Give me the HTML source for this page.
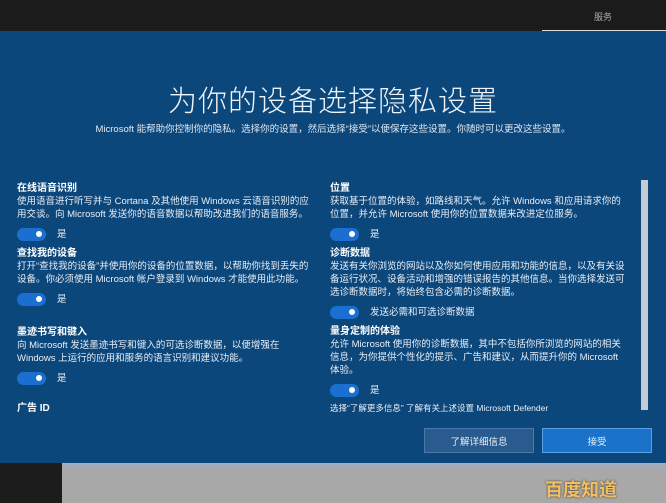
<!DOCTYPE html>
<html><head><meta charset="utf-8"><style>
*{margin:0;padding:0;box-sizing:border-box}
html{background:#a8a8a8}
body{width:666px;height:500px;overflow:hidden;background:#0c477c;font-family:"Liberation Sans","Noto Sans CJK SC",sans-serif;color:#e8eef5;position:relative}
.top{position:absolute;left:0;top:0;width:666px;height:31px;background:#1b1b1b}
.top span{position:absolute;left:594px;top:10px;font-size:9px;color:#aaa}
.topline{position:absolute;left:542px;top:30px;width:124px;height:1px;background:#ddd}
h1{position:absolute;top:78px;width:666px;text-align:center;font-weight:300;font-size:29px;color:#eef4fa;letter-spacing:1px}
.sub{position:absolute;top:121px;width:666px;text-align:center;font-size:9.5px;color:#dfe8f1}
.col{position:absolute;top:182px;font-size:9.5px;line-height:13px}
.col b{display:block;font-size:10px;color:#fff}
.t{display:flex;align-items:center;height:22px;margin:2px 0 2px}
.sw{width:29px;height:13px;border-radius:7px;background:#1a6fd0;position:relative;margin-right:11px}
.sw:after{content:"";position:absolute;right:4px;top:3.5px;width:6px;height:6px;border-radius:50%;background:#fff}
.sb{position:absolute;left:641px;top:180px;width:7px;height:230px;background:#c4ccd4}
.btn{position:absolute;top:428px;width:110px;height:25px;font-size:9.5px;display:flex;align-items:center;justify-content:center}
.b1{left:424px;background:#2a5b8e;border:1px solid #4a7aab}
.b2{left:542px;background:#1a72c9;border:1px solid #5aa0e6}
.bot1{position:absolute;left:0;top:463px;width:62px;height:40px;background:#1c1c1c}
.bot2{position:absolute;left:62px;top:463px;width:604px;height:40px;background:linear-gradient(#9fb0c0,#a8a8a8 8px)}
.wm{position:absolute;left:545px;top:476px;font-size:18px;font-weight:bold;color:#f3c060;text-shadow:0 0 2px #333}
</style></head><body>
<div class="top"><span>服务</span></div><div class="topline"></div>
<h1>为你的设备选择隐私设置</h1>
<div class="sub">Microsoft 能帮助你控制你的隐私。选择你的设置，然后选择“接受”以便保存这些设置。你随时可以更改这些设置。</div>
<div class="col" style="left:17px;width:300px">
<b>在线语音识别</b>使用语音进行听写并与 Cortana 及其他使用 Windows 云语音识别的应用交谈。向 Microsoft 发送你的语音数据以帮助改进我们的语音服务。
<div class="t"><div class="sw"></div>是</div>
<b>查找我的设备</b>打开“查找我的设备”并使用你的设备的位置数据，以帮助你找到丢失的设备。你必须使用 Microsoft 帐户登录到 Windows 才能使用此功能。
<div class="t" style="margin-bottom:16px"><div class="sw"></div>是</div>
<b>墨迹书写和键入</b>向 Microsoft 发送墨迹书写和键入的可选诊断数据，以便增强在<br>Windows 上运行的应用和服务的语言识别和建议功能。
<div class="t" style="margin-bottom:13px"><div class="sw"></div>是</div>
<b>广告 ID</b>
</div>
<div class="col" style="left:330px;width:300px">
<b>位置</b>获取基于位置的体验，如路线和天气。允许 Windows 和应用请求你的位置，并允许 Microsoft 使用你的位置数据来改进定位服务。
<div class="t"><div class="sw"></div>是</div>
<b>诊断数据</b>发送有关你浏览的网站以及你如何使用应用和功能的信息，以及有关设备运行状况、设备活动和增强的错误报告的其他信息。当你选择发送可选诊断数据时，将始终包含必需的诊断数据。
<div class="t"><div class="sw"></div>发送必需和可选诊断数据</div>
<b>量身定制的体验</b>允许 Microsoft 使用你的诊断数据，其中不包括你所浏览的网站的相关信息，为你提供个性化的提示、广告和建议，从而提升你的 Microsoft 体验。
<div class="t" style="margin-bottom:1px"><div class="sw"></div>是</div>
<div style="font-size:8.5px">选择“了解更多信息” 了解有关上述设置 Microsoft Defender</div>
</div>
<div class="sb"></div>
<div class="btn b1">了解详细信息</div>
<div class="btn b2">接受</div>
<div class="bot1"></div><div class="bot2"></div>
<div class="wm">百度知道</div>
</body></html>
